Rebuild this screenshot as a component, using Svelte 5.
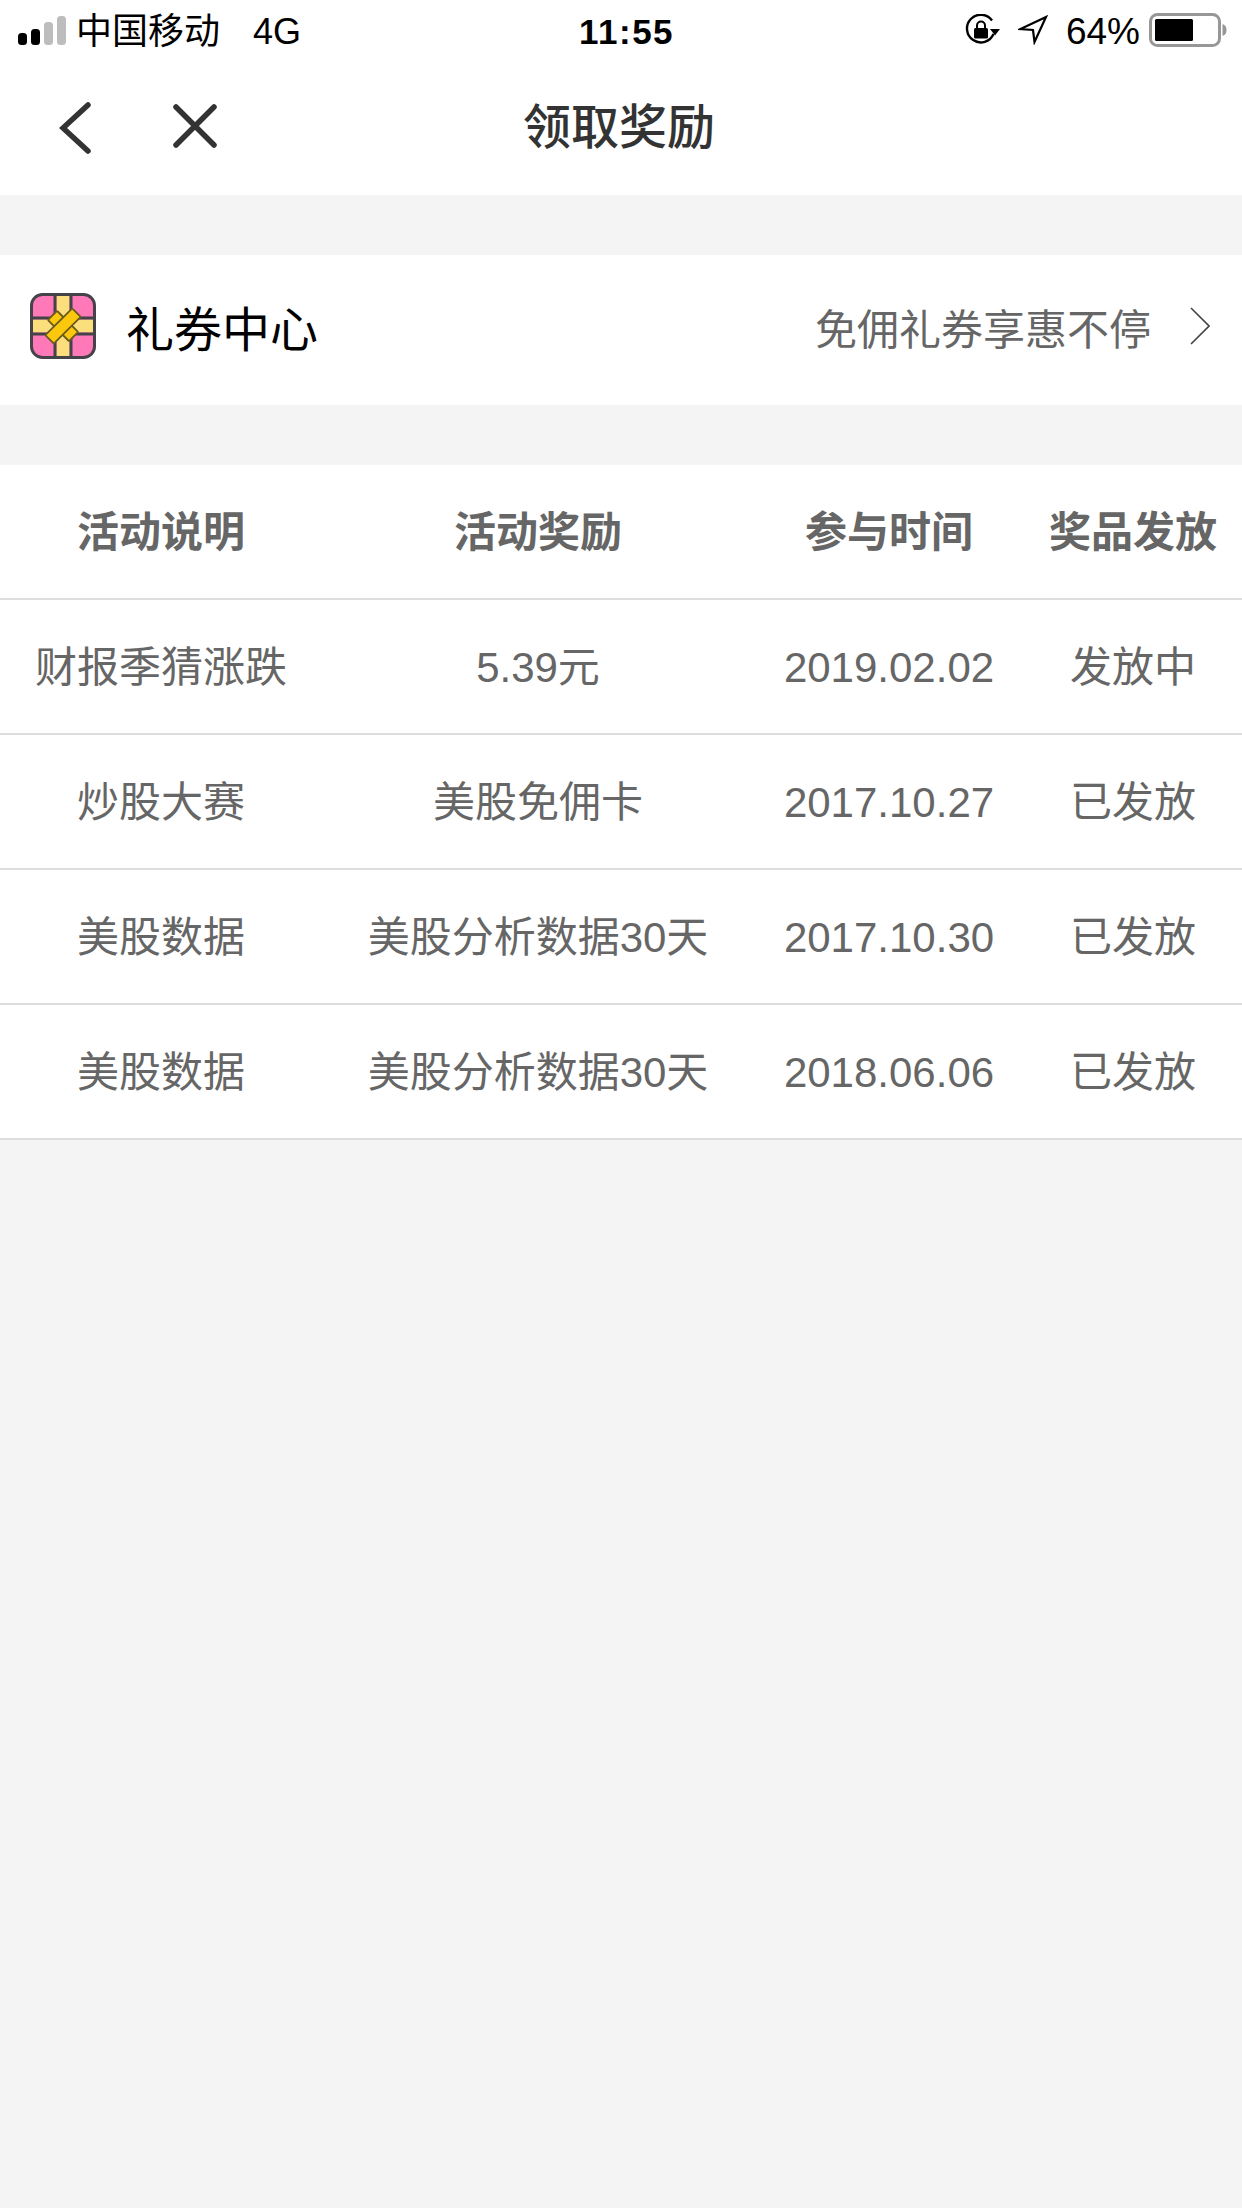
<script>
  const rows = [
    ['财报季猜涨跌', '5.39元', '2019.02.02', '发放中'],
    ['炒股大赛', '美股免佣卡', '2017.10.27', '已发放'],
    ['美股数据', '美股分析数据30天', '2017.10.30', '已发放'],
    ['美股数据', '美股分析数据30天', '2018.06.06', '已发放']
  ];
  const head = ['活动说明', '活动奖励', '参与时间', '奖品发放'];
</script>

<div class="page">
  <div class="status">
    <div class="st-left">
      <svg class="signal" width="48" height="29" viewBox="0 0 48 29">
        <rect x="0" y="17" width="9" height="12" rx="3.5" fill="#000"/>
        <rect x="13" y="13" width="9" height="16" rx="3.5" fill="#000"/>
        <rect x="26" y="6" width="9" height="23" rx="3.5" fill="#bdbdbd"/>
        <rect x="39" y="0" width="9" height="29" rx="3.5" fill="#bdbdbd"/>
      </svg>
      <span class="carrier">中国移动</span>
      <span class="net">4G</span>
    </div>
    <div class="time">11:55</div>
    <div class="st-right">
      <svg width="35" height="32" viewBox="0 0 35 32">
        <path d="M28.5 20 A13.8 13.8 0 1 1 27 6.5" fill="none" stroke="#000" stroke-width="2.4"/>
        <path d="M25 15 L35 15 L30 21.5 Z" fill="#000"/>
        <rect x="9" y="14" width="14" height="10.5" rx="1.5" fill="#000"/>
        <path d="M12 14 V11.5 a4 4 0 0 1 8 0 V14" fill="none" stroke="#000" stroke-width="2"/>
      </svg>
      <svg class="loc" width="30" height="30" viewBox="0 0 30 30">
        <path d="M2.5 14 L28 2 L16.5 27 L15 15 Z" fill="none" stroke="#000" stroke-width="2.2" stroke-linejoin="miter"/>
      </svg>
      <span class="pct">64%</span>
      <svg class="batt" width="78" height="34" viewBox="0 0 78 34">
        <rect x="1.5" y="1.5" width="69" height="31" rx="7" fill="#fff" stroke="#979797" stroke-width="3"/>
        <rect x="6" y="6" width="38" height="22" rx="1.5" fill="#000"/>
        <path d="M73.5 11 C76.5 12 77.5 14 77.5 17 C77.5 20 76.5 22 73.5 23 Z" fill="#979797"/>
      </svg>
    </div>
  </div>

  <header class="nav">
    <svg class="back" width="32" height="52" viewBox="0 0 32 52">
      <path d="M29 3 L4 26 L29 49" fill="none" stroke="#333" stroke-width="5.5" stroke-linecap="round" stroke-linejoin="miter"/>
    </svg>
    <svg class="close" width="44" height="44" viewBox="0 0 44 44">
      <path d="M3 3 L41 41 M41 3 L3 41" fill="none" stroke="#333" stroke-width="5.5" stroke-linecap="round"/>
    </svg>
    <h1>领取奖励</h1>
  </header>

  <section class="coupon">
    <svg class="gift" width="66" height="66" viewBox="0 0 66 66">
      <rect x="1.5" y="1.5" width="63" height="63" rx="11" fill="#ff78b8" stroke="#45434a" stroke-width="3"/>
      <rect x="3" y="26.5" width="60" height="13" fill="#fbdf7c"/>
      <rect x="26.5" y="3" width="13" height="60" fill="#fbdf7c"/>
      <path d="M3 25 H25 V3 M41 3 V25 H63 M63 41 H41 V63 M25 63 V41 H3" fill="none" stroke="#45434a" stroke-width="3"/>
      <rect x="18" y="26.5" width="30" height="13" rx="1" fill="#fbc80e" stroke="#6b5a20" stroke-width="1.8" transform="rotate(45 33 33)"/>
      <rect x="14" y="27" width="38" height="12" rx="1" fill="#fbc80e" stroke="#6b5a20" stroke-width="1.8" transform="rotate(-45 33 33)"/>
    </svg>
    <span class="c-title">礼券中心</span>
    <span class="c-sub">免佣礼券享惠不停</span>
    <svg class="chev" width="20" height="38" viewBox="0 0 20 38">
      <path d="M1 1 L19 19 L1 37" fill="none" stroke="#444" stroke-width="1.6"/>
    </svg>
  </section>

  <section class="table">
    <div class="row head">
      {#each head as h}<div class="cell">{h}</div>{/each}
    </div>
    {#each rows as r}
      <div class="row">
        {#each r as c}<div class="cell">{c}</div>{/each}
      </div>
    {/each}
  </section>
</div>

<style>
  :global(body) { margin: 0; background: #f4f4f4; }
  .page {
    width: 1242px; height: 2208px; background: #f4f4f4; overflow: hidden;
    font-family: "Liberation Sans", "Noto Sans CJK SC", sans-serif;
  }
  .status {
    height: 62px; box-sizing: border-box; background: #fff; display: flex; align-items: center;
    justify-content: space-between; padding: 0 15px 2px 18px; position: relative; color: #000;
  }
  .st-left { display: flex; align-items: center; }
  .signal { margin-right: 10px; }
  .carrier { font-size: 36px; line-height: 44px; padding-top: 3px; }
  .net { font-size: 36px; line-height: 44px; padding-top: 3px; margin-left: 33px; }
  .time {
    position: absolute; left: 579px; top: 11px; font-size: 35px; font-weight: 700; letter-spacing: 1.5px;
    line-height: 42px;
  }
  .st-right { display: flex; align-items: center; }
  .loc { margin-left: 18px; }
  .pct { font-size: 37px; line-height: 44px; padding-top: 3px; margin-left: 18px; }
  .batt { margin-left: 9px; }
  .nav {
    height: 133px; background: #fff; display: flex; align-items: center; position: relative;
    padding-left: 59px;
  }
  .back { margin-top: -2px; }
  .close { margin-left: 82px; margin-top: -5px; }
  h1 {
    position: absolute; left: 0; right: 4px; top: 39px; margin: 0; text-align: center;
    font-size: 48px; font-weight: 500; color: #333; line-height: 54px;
  }
  .coupon {
    margin-top: 60px; height: 150px; box-sizing: border-box; background: #fff; display: flex; align-items: center;
    padding: 0 32px 8px 30px;
  }
  .c-title { font-size: 48px; color: #000; margin-left: 30px; }
  .c-sub { font-size: 42px; color: #666; margin-left: auto; }
  .chev { margin-left: 39px; }
  .table { margin-top: 60px; }
  .row {
    display: grid; grid-template-columns: 322px 432px 270px 218px; box-sizing: border-box;
    height: 135px; padding-top: 3px; background: #fff; border-bottom: 2px solid #ddd; align-items: center;
  }
  .cell { text-align: center; font-size: 42px; line-height: 56px; color: #666; }
  .head .cell { font-weight: 700; font-size: 42px; }
</style>
